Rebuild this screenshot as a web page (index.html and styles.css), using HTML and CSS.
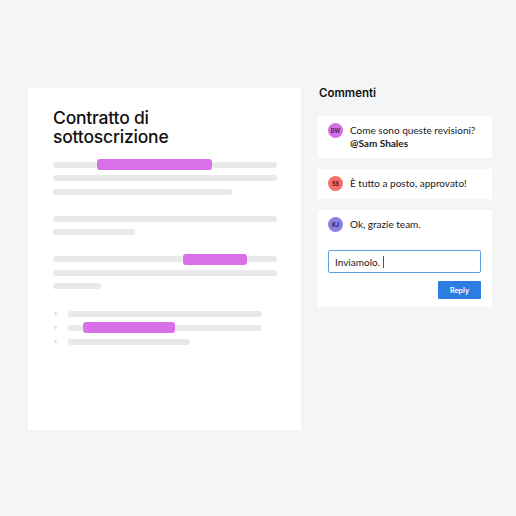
FILE: index.html
```html
<!DOCTYPE html>
<html lang="it">
<head>
<meta charset="utf-8">
<title>Contratto</title>
<link rel="stylesheet" href="styles.css">
</head>
<body>
<div class="stage">
  <div class="doc">
    <h1 class="doc-title">Contratto di<br>sottoscrizione</h1>
    <div class="para">
      <div class="row"><span class="bar" style="width:44px"></span><span class="hl" style="width:115px"></span><span class="bar" style="width:65px"></span></div>
      <div class="row"><span class="bar" style="width:224px"></span></div>
      <div class="row"><span class="bar" style="width:179px"></span></div>
    </div>
    <div class="para">
      <div class="row"><span class="bar" style="width:224px"></span></div>
      <div class="row"><span class="bar" style="width:82px"></span></div>
    </div>
    <div class="para">
      <div class="row"><span class="bar" style="width:130px"></span><span class="hl" style="width:64px"></span><span class="bar" style="width:30px"></span></div>
      <div class="row"><span class="bar" style="width:224px"></span></div>
      <div class="row"><span class="bar" style="width:48px"></span></div>
    </div>
    <div class="para list">
      <div class="row"><span class="dot"></span><span class="bar" style="width:194px"></span></div>
      <div class="row"><span class="dot"></span><span class="bar" style="width:15px"></span><span class="hl" style="width:92px"></span><span class="bar" style="width:87px"></span></div>
      <div class="row"><span class="dot"></span><span class="bar" style="width:122px"></span></div>
    </div>
  </div>
  <div class="comments">
    <h2 class="comments-title">Commenti</h2>
    <div class="card">
      <div class="comment">
        <span class="avatar av-bw">BW</span>
        <p class="text">Come sono queste revisioni?<br><strong>@Sam Shales</strong></p>
      </div>
    </div>
    <div class="card">
      <div class="comment">
        <span class="avatar av-ss">SS</span>
        <p class="text">È tutto a posto, approvato!</p>
      </div>
    </div>
    <div class="card">
      <div class="comment">
        <span class="avatar av-kj">KJ</span>
        <p class="text">Ok, grazie team.</p>
      </div>
      <div class="input">Inviamolo.<span class="caret"></span></div>
      <div class="actions"><button class="reply">Reply</button></div>
    </div>
  </div>
</div>
</body>
</html>
```
FILE: styles.css
```css
* { box-sizing: border-box; }
html, body { margin: 0; padding: 0; }
body {
  background: #f4f5f7;
  font-family: "Lato", "Inter", sans-serif;
  color: #1a1a1f;
  width: 516px;
  height: 516px;
}
.stage {
  display: flex;
  align-items: flex-start;
  padding: 84px 0 0 28px;
  gap: 17px;
}
.doc {
  width: 273px;
  height: 342px;
  margin-top: 4px;
  background: #fff;
  padding: 20px 24px 0 25px;
  box-shadow: 0 0 3px rgba(0,0,0,0.03);
}
.doc-title {
  margin: 0 0 12px;
  font-family: "Inter", sans-serif;
  font-weight: 500;
  font-size: 17.5px;
  line-height: 19px;
  letter-spacing: -0.2px;
  color: #111;
}
.para { margin-bottom: 13.5px; }
.row {
  height: 13.5px;
  display: flex;
  align-items: center;
}
.bar {
  flex: none;
  height: 6px;
  background: #e9e9eb;
  border-radius: 3px;
}
.hl {
  flex: none;
  height: 11px;
  background: #d870e7;
  border-radius: 3px;
  z-index: 1;
}
.list .row { height: 14px; }
.dot {
  flex: none;
  width: 3px;
  height: 3px;
  border-radius: 50%;
  background: #dedee2;
  margin-left: 1px;
  margin-right: 11px;
}
.comments {
  width: 174px;
}
.comments-title {
  margin: 2px 0 16px 1px;
  font-family: "Inter", sans-serif;
  font-weight: 600;
  font-size: 11.5px;
  line-height: 14px;
  color: #111;
}
.card {
  background: #fff;
  padding: 7px 11px 8px 10px;
  margin-bottom: 11px;
}
.comment {
  display: flex;
  align-items: flex-start;
  gap: 7px;
}
.avatar {
  flex: none;
  width: 15px;
  height: 15px;
  border-radius: 50%;
  display: flex;
  align-items: center;
  justify-content: center;
  font-family: "Inter", sans-serif;
  font-size: 5.5px;
  font-weight: 700;
}
.av-bw { background: #d66fe6; color: #5b1d6c; }
.av-ss { background: #f3716b; color: #6a1616; }
.av-kj { background: #8a80e6; color: #1f1a5a; }
.text {
  margin: 0;
  font-size: 10px;
  line-height: 13px;
  padding-top: 1px;
  white-space: nowrap;
  color: #1a1a22;
}
.text strong { font-weight: 700; }
.input {
  margin-top: 18px;
  height: 23px;
  border: 1.5px solid #5f9fe2;
  border-radius: 2px;
  padding: 0 6px;
  display: flex;
  align-items: center;
  font-size: 10px;
  color: #1a1a22;
}
.caret {
  display: inline-block;
  width: 1px;
  height: 12px;
  background: #555;
  margin-left: 3px;
}
.actions {
  display: flex;
  justify-content: flex-end;
  margin-top: 8px;
}
.reply {
  width: 43px;
  height: 18px;
  border: 0;
  border-radius: 1px;
  background: #2b7de2;
  color: #fff;
  font-family: "Inter", sans-serif;
  font-size: 7px;
  font-weight: 600;
  padding: 0;
}
```
